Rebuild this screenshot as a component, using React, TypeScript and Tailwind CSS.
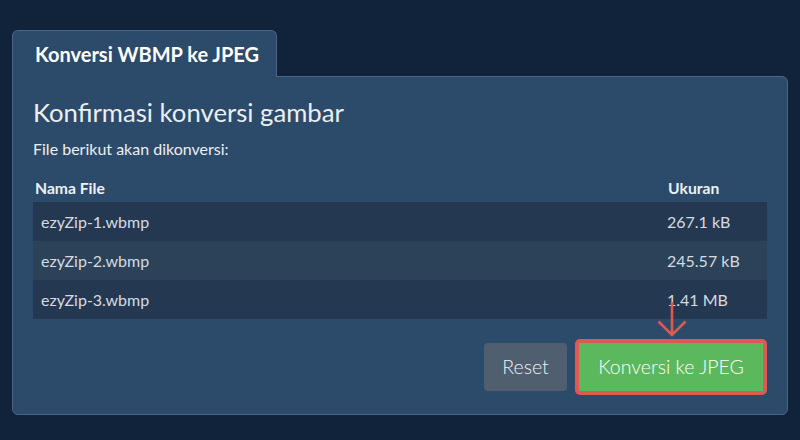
export default function App() {
  const rows = [
    { name: "ezyZip-1.wbmp", size: "267.1 kB", bg: "bg-[#253851]" },
    { name: "ezyZip-2.wbmp", size: "245.57 kB", bg: "bg-[#2b4259]" },
    { name: "ezyZip-3.wbmp", size: "1.41 MB", bg: "bg-[#253851]" },
  ];
  return (
    <div
      className="w-[800px] h-[440px] bg-[#11233a] pt-[30px] px-[12px]"
      style={{ fontFamily: "Lato, 'Open Sans', sans-serif" }}
    >
      <div className="relative z-10 -mb-px w-[265px] h-[47px] bg-[#2c4a6a] border border-b-0 border-[#4b6584] rounded-t-md pl-[22px] pt-[11px]">
        <span className="text-[20px] leading-[24px] font-bold text-white">Konversi WBMP ke JPEG</span>
      </div>
      <div className="relative w-[776px] h-[339px] bg-[#2c4a6a] border border-[#4b6584] rounded-b-md rounded-tr-md pl-[20px] pr-[20px] pt-[19px]">
        <div className="text-[25.7px] leading-[32px] text-[#eceff2]">Konfirmasi konversi gambar</div>
        <div className="mt-[11px] text-[16px] leading-[20px] text-[#eceff2]">File berikut akan dikonversi:</div>
        <div className="mt-[19px] grid grid-cols-[1fr_100px] h-[24px] text-[15.7px] leading-[20px] font-bold text-[#eef1f4]">
          <div className="pl-[2px]">Nama File</div>
          <div className="pl-px">Ukuran</div>
        </div>
        {rows.map((r) => (
          <div key={r.name} className={`grid grid-cols-[1fr_100px] h-[39px] items-center text-[16px] text-[#d5dbe1] ${r.bg}`}>
            <div className="pl-[8px]">{r.name}</div>
            <div>{r.size}</div>
          </div>
        ))}
        <div className="mt-[20px] flex justify-end items-center gap-[8px]">
          <button className="w-[83px] h-[48px] rounded-[4px] bg-[#4f5f70] text-[19.5px] font-light text-[#eef1f4]">Reset</button>
          <div className="relative border-[4px] border-[#dc5a52] rounded-[5px]">
            <button className="w-[184px] h-[48px] bg-[#5cb85c] text-[19.5px] font-light text-white">Konversi ke JPEG</button>
            <svg className="absolute left-[78px] -top-[41px]" width="30" height="38" viewBox="0 0 30 38">
              <path d="M15 0 V33 M1.5 19.5 L15 33 L28.5 19.5" fill="none" stroke="#dc5a52" strokeWidth="2.6" />
            </svg>
          </div>
        </div>
      </div>
    </div>
  );
}
